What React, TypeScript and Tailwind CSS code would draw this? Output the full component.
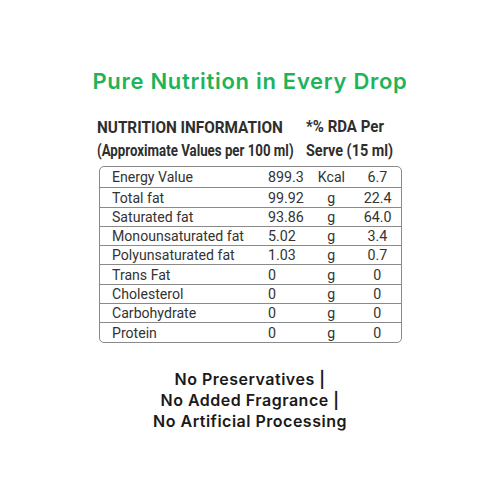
import React from "react";

const rows: [string, string, string, string][] = [
  ["Energy Value", "899.3", "Kcal", "6.7"],
  ["Total fat", "99.92", "g", "22.4"],
  ["Saturated fat", "93.86", "g", "64.0"],
  ["Monounsaturated fat", "5.02", "g", "3.4"],
  ["Polyunsaturated fat", "1.03", "g", "0.7"],
  ["Trans Fat", "0", "g", "0"],
  ["Cholesterol", "0", "g", "0"],
  ["Carbohydrate", "0", "g", "0"],
  ["Protein", "0", "g", "0"],
];

const heights = ["h-[21px]", "h-[20px]", "h-[19px]", "h-[19px]", "h-[19px]", "h-[20px]", "h-[19px]", "h-[19px]", "h-[19px]"];

const roboto = { fontFamily: 'Roboto, "Liberation Sans", sans-serif' };

export default function App() {
  return (
    <div className="w-[500px] h-[500px] bg-white flex flex-col items-center">
      <h1
        className="mt-[68px] text-[22px] leading-[26px] font-semibold text-[#1fb35a] tracking-[0.7px] whitespace-nowrap"
        style={{ fontFamily: 'Inter, "Open Sans", sans-serif' }}
      >
        Pure Nutrition in Every Drop
      </h1>
      <div className="mt-[21px] w-[306px] text-[#2e2e2e]" style={roboto}>
        <div className="flex leading-[24px] font-bold whitespace-nowrap">
          <div className="w-[209px]">
            <div className="text-[17px] origin-left scale-x-[0.9]">NUTRITION INFORMATION</div>
            <div className="text-[16px] origin-left scale-x-[0.83]">(Approximate Values per 100 ml)</div>
          </div>
          <div>
            <div className="text-[16.5px] origin-left scale-x-[0.91]">*% RDA Per</div>
            <div className="text-[16px] origin-left scale-x-[0.9]">Serve (15 ml)</div>
          </div>
        </div>
        <div className="mt-[3px] ml-[2px] w-[303px] border border-[#8a8a8a] rounded-[5px] text-[15px] text-[#333]">
          {rows.map((r, i) => (
            <div
              key={r[0]}
              className={`grid grid-cols-[168px_42px_42px_51px] ${heights[i]} items-center leading-[18px] whitespace-nowrap ${
                i < rows.length - 1 ? "border-b border-[#8a8a8a]" : ""
              }`}
            >
              <div className="pl-[12px]">
                <span className="inline-block origin-left scale-x-[0.94]">{r[0]}</span>
              </div>
              <div>
                <span className="inline-block origin-left scale-x-[0.95]">{r[1]}</span>
              </div>
              <div className="text-center">
                <span className="inline-block scale-x-[0.94]">{r[2]}</span>
              </div>
              <div className="text-center">
                <span className="inline-block scale-x-[0.95]">{r[3]}</span>
              </div>
            </div>
          ))}
        </div>
      </div>
      <div
        className="mt-[26px] text-center text-[16px] leading-[21px] font-semibold text-[#1a1a1a] tracking-[0.5px]"
        style={{ fontFamily: 'Inter, "Open Sans", sans-serif' }}
      >
        <div>No Preservatives |</div>
        <div>No Added Fragrance |</div>
        <div>No Artificial Processing</div>
      </div>
    </div>
  );
}
